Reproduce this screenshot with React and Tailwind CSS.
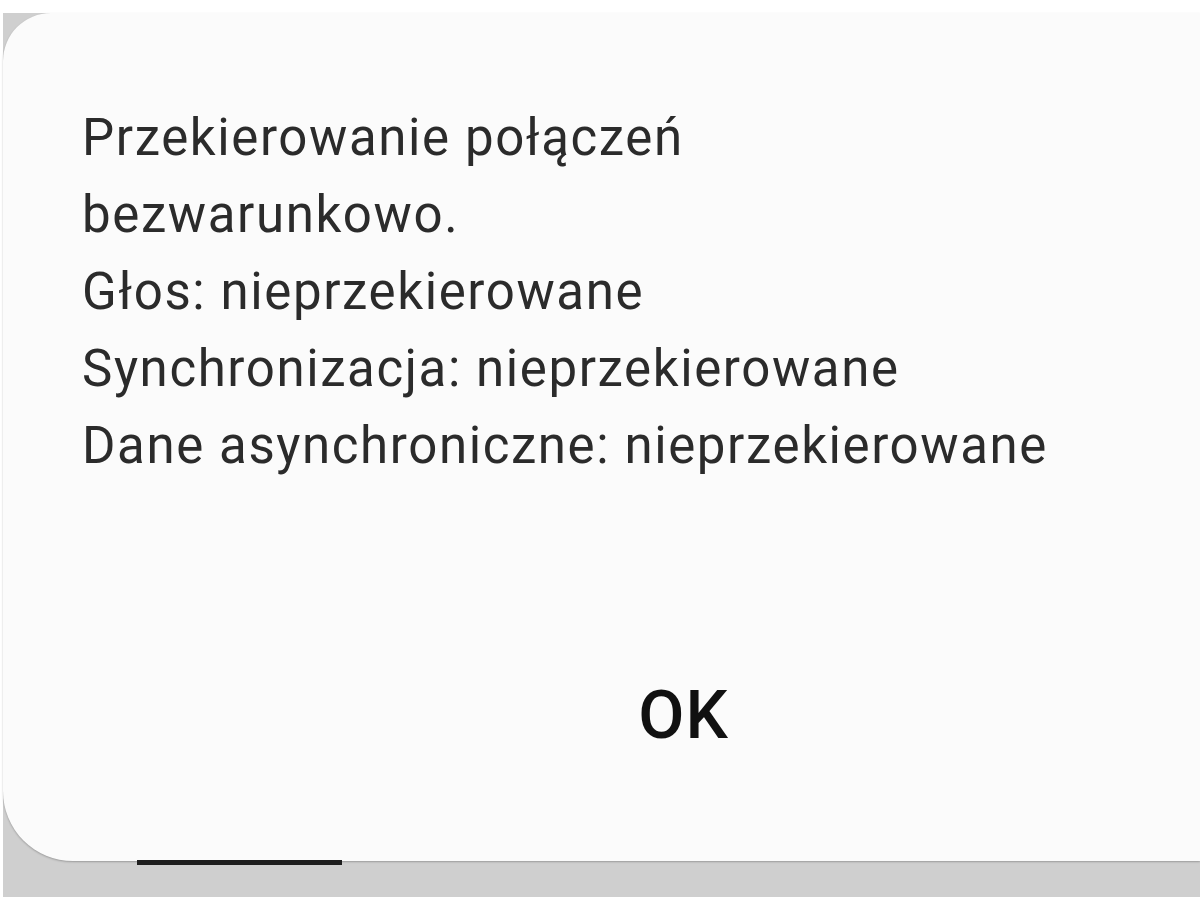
export default function App() {
  const lines = [
    "Przekierowanie połączeń",
    "bezwarunkowo.",
    "Głos: nieprzekierowane",
    "Synchronizacja: nieprzekierowane",
    "Dane asynchroniczne: nieprzekierowane",
  ];
  return (
    <div className="w-[1200px] h-[897px] bg-white pt-[13px] pl-[3px] overflow-hidden" style={{ fontFamily: "Roboto, 'Noto Sans', sans-serif" }}>
      <div className="bg-[#cfcfcf] h-full flex flex-col">
        <div className="h-[848px] bg-[#fbfbfb] rounded-tl-[48px] rounded-bl-[70px] shadow-[0_1px_2px_rgba(0,0,0,0.25)] flex flex-col">
          <div className="pl-[79px] pt-[86px] text-[51px] leading-[77px] tracking-[1.6px] text-[#2b2b2b]">
            {lines.map((l) => (
              <div key={l}>{l}</div>
            ))}
          </div>
          <div className="flex-1" />
          <div className="flex justify-center pl-[164px] pb-[112px]">
            <span className="text-[67px] leading-[67px] font-medium tracking-[1px] text-[#111]">OK</span>
          </div>
        </div>
        <div className="ml-[134px] w-[205px] h-[5px] bg-[#1e1e1e] -mt-[1px]" />
      </div>
    </div>
  );
}
